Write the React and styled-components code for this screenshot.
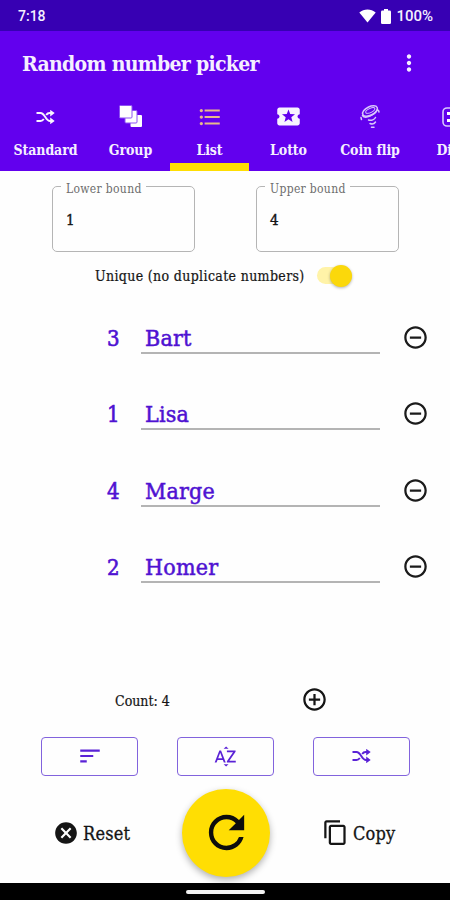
import React, { useState } from "react";
import styled, { createGlobalStyle } from "styled-components";
import {
  MdMoreVert,
  MdFormatListBulleted,
  MdLocalActivity,
  MdRemoveCircleOutline,
  MdAddCircleOutline,
  MdSort,
  MdSortByAlpha,
  MdCancel,
  MdContentCopy,
  MdRefresh,
} from "react-icons/md";

const GlobalStyle = createGlobalStyle`
  * {
    box-sizing: border-box;
  }
  body {
    margin: 0;
    background: #fefefe;
    font-family: "DejaVu Serif Condensed", "DejaVu Serif", serif;
    font-stretch: condensed;
  }
  button {
    padding: 0;
    border: 0;
    background: none;
    font: inherit;
    color: inherit;
  }
  svg {
    display: block;
    flex: none;
  }
`;

const ShuffleIcon = () => (
  <svg width="19" height="14" viewBox="0 0 19 14" fill="none">
    <path d="M0.5 3H4.5C9 3 9.500 11 14 11H15M0.500 11H4.500C6 11 7 10.200 7.800 9M10.200 5C11 3.800 12 3 13.500 3H15" stroke="currentColor" strokeWidth="1.900" />
    <path d="M14.200 -0.200L18.700 3L14.200 6.400ZM14.200 7.600L18.700 11L14.200 14.200Z" fill="currentColor" />
  </svg>
);

const GroupIcon = () => (
  <svg width="24" height="23" viewBox="0 0 24 23">
    <rect x="11.500" y="10" width="11.500" height="12" rx="1" fill="#fff" />
    <rect x="6" y="5.500" width="12" height="12.500" rx="1" fill="#fff" stroke="#8d52f3" strokeWidth="1" />
    <rect x="0.500" y="0.500" width="12.500" height="12.500" rx="1" fill="#fff" stroke="#8d52f3" strokeWidth="1" />
  </svg>
);

const CoinIcon = () => (
  <svg width="20" height="24" viewBox="0 0 20 24" fill="none" stroke="#d9c8fb" strokeWidth="1.500" strokeLinecap="round">
    <ellipse cx="10" cy="6" rx="8" ry="4.200" transform="rotate(-26 10 6)" />
    <ellipse cx="10.300" cy="5.500" rx="5" ry="2" transform="rotate(-26 10.300 5.500)" strokeWidth="0.900" />
    <path d="M2.500 10.500C5 14.500 15 10 17.500 4.500M1 12.500L1.500 14.500M18.500 5.500L19 7" />
    <path d="M8.500 15C11.500 16 14.500 14.500 15.500 12.500M10 18.500C12 19.300 14.500 18.500 15.500 17M11.500 22.300H14" />
  </svg>
);

const DiceIcon = () => (
  <svg width="20" height="20" viewBox="0 0 20 20" fill="none">
    <rect x="1" y="1" width="18" height="18" rx="4" stroke="#d9c8fb" strokeWidth="1.600" />
    <path d="M5 5H8V8H5ZM12 5H15V8H12ZM5 12H8V15H5ZM12 12H15V15H12Z" fill="#fff" />
  </svg>
);

const WifiIcon = () => (
  <svg width="17" height="14" viewBox="0 0 17 14">
    <path d="M0.300 3.400C5 -0.500 12 -0.500 16.700 3.400L8.500 13.500Z" fill="#fff" />
  </svg>
);

const BatteryIcon = () => (
  <svg width="10" height="15" viewBox="0 0 10 15">
    <path d="M3 0H7V1.600H8.700Q10 1.600 10 2.900V13.700Q10 15 8.700 15H1.300Q0 15 0 13.700V2.900Q0 1.600 1.300 1.600H3Z" fill="#fff" />
  </svg>
);

const tabs = [
  { id: "standard", title: "Standard", width: 91, icon: <ShuffleIcon /> },
  { id: "group", title: "Group", width: 79, icon: <GroupIcon /> },
  { id: "list", title: "List", width: 79, icon: <MdFormatListBulleted size={26} /> },
  { id: "lotto", title: "Lotto", width: 79, icon: <MdLocalActivity size={27} /> },
  { id: "coin", title: "Coin flip", width: 84, icon: <CoinIcon /> },
  { id: "dice", title: "Dice", width: 80, icon: <DiceIcon /> },
];

const items = [
  { id: 1, order: 3, name: "Bart" },
  { id: 2, order: 1, name: "Lisa" },
  { id: 3, order: 4, name: "Marge" },
  { id: 4, order: 2, name: "Homer" },
];

const App = () => {
  const [active, setActive] = useState("list");
  const [unique, setUnique] = useState(true);

  return (
    <Screen>
      <GlobalStyle />
      <StatusBar>
        <Clock>7:18</Clock>
        <WifiIcon />
        <BatteryIcon />
        <Percent>100%</Percent>
      </StatusBar>
      <Header>
        <TitleRow>
          <Title>Random number picker</Title>
          <button aria-label="More"><MdMoreVert size={26} /></button>
        </TitleRow>
        <Tabs>
          {tabs.map((tab) => (
            <Tab key={tab.id} $width={tab.width} $active={active === tab.id} onClick={() => setActive(tab.id)}>
              <TabIcon $active={active === tab.id}>{tab.icon}</TabIcon>
              <TabTitle>{tab.title}</TabTitle>
            </Tab>
          ))}
        </Tabs>
      </Header>
      <Bounds>
        <Field>
          <FieldLabel>Lower bound</FieldLabel>
          <FieldValue>1</FieldValue>
        </Field>
        <Field>
          <FieldLabel>Upper bound</FieldLabel>
          <FieldValue>4</FieldValue>
        </Field>
      </Bounds>
      <UniqueRow>
        <UniqueText>Unique (no duplicate numbers)</UniqueText>
        <Track $on={unique} onClick={() => setUnique(!unique)}>
          <Thumb />
        </Track>
      </UniqueRow>
      <List>
        {items.map((item) => (
          <ListItem key={item.id}>
            <Order>{item.order}</Order>
            <Name>{item.name}</Name>
            <button aria-label="Remove"><MdRemoveCircleOutline size={27} /></button>
          </ListItem>
        ))}
      </List>
      <CountRow>
        <Count>Count: {items.length}</Count>
        <button aria-label="Add"><MdAddCircleOutline size={27} /></button>
      </CountRow>
      <SortRow>
        <SortButton><MdSort size={26} /></SortButton>
        <SortButton><MdSortByAlpha size={25} /></SortButton>
        <SortButton><ShuffleIcon /></SortButton>
      </SortRow>
      <Actions>
        <Action>
          <MdCancel size={26} />
          <span>Reset</span>
        </Action>
        <Fab aria-label="Pick"><MdRefresh size={53} /></Fab>
        <Action>
          <MdContentCopy size={27} />
          <span>Copy</span>
        </Action>
      </Actions>
      <NavBar><NavPill /></NavBar>
    </Screen>
  );
};

const Screen = styled.div`
  width: 450px;
  height: 900px;
  display: flex;
  flex-direction: column;
  overflow: hidden;
  background: #fefefe;
  color: #151515;
`;

const StatusBar = styled.div`
  height: 30.500px;
  flex: none;
  display: flex;
  align-items: center;
  padding: 2px 17px 0 18px;
  background: #3700b3;
  color: #f4f0ff;
  font-family: Roboto, sans-serif;
  font-size: 14px;
  font-stretch: normal;
  font-weight: 500;
  svg {
    margin-right: 5px;
  }
`;

const Clock = styled.span`
  flex: 1;
`;

const Percent = styled.span`
  font-size: 15px;
`;

const Header = styled.header`
  height: 140.500px;
  flex: none;
  background: #6200ee;
  color: #f5efff;
`;

const TitleRow = styled.div`
  height: 65px;
  display: flex;
  align-items: center;
  justify-content: space-between;
  padding: 0 28px 0 22px;
`;

const Title = styled.h1`
  margin: 0;
  font-size: 21px;
  font-weight: 700;
  letter-spacing: -0.700px;
  white-space: nowrap;
`;

const Tabs = styled.nav`
  height: 75.500px;
  display: flex;
  overflow: hidden;
`;

const Tab = styled.button`
  width: ${({ $width }) => $width}px;
  flex: none;
  display: flex;
  flex-direction: column;
  align-items: center;
  border-bottom: 8px solid ${({ $active }) => ($active ? "#ffde03" : "transparent")};
`;

const TabIcon = styled.span`
  height: 42px;
  display: flex;
  align-items: center;
  color: ${({ $active }) => ($active ? "#e8b98a" : "#f8f3ff")};
`;

const TabTitle = styled.span`
  font-size: 14px;
  line-height: 24px;
  font-weight: 700;
  letter-spacing: -0.100px;
  white-space: nowrap;
`;

const Bounds = styled.div`
  display: flex;
  justify-content: space-between;
  padding: 5px 51px 0 52px;
`;

const Field = styled.fieldset`
  width: 143px;
  height: 75.500px;
  margin: 0;
  padding: 0 12px;
  border: 1.500px solid #b5b5b5;
  border-radius: 5px;
`;

const FieldLabel = styled.legend`
  margin-left: -4px;
  padding: 6px 4px 0 5px;
  font-size: 12px;
  line-height: 14px;
  letter-spacing: 0.320px;
  color: #6d6d6d;
  white-space: nowrap;
`;

const FieldValue = styled.div`
  padding: 12px 0 0 1px;
  font-size: 15px;
  line-height: 24px;
  -webkit-text-stroke: 0.400px currentColor;
`;

const UniqueRow = styled.div`
  height: 48px;
  display: flex;
  align-items: center;
  gap: 13px;
  padding-left: 95px;
`;

const UniqueText = styled.span`
  width: 209px;
  font-size: 14px;
  letter-spacing: 0.350px;
  white-space: nowrap;
  -webkit-text-stroke: 0.200px currentColor;
`;

const Track = styled.button`
  width: 35px;
  height: 17px;
  display: flex;
  align-items: center;
  justify-content: ${({ $on }) => ($on ? "flex-end" : "flex-start")};
  border-radius: 9px;
  background: #fff3a8;
`;

const Thumb = styled.span`
  width: 22px;
  height: 22px;
  flex: none;
  border-radius: 50%;
  background: #fbd80b;
  box-shadow: 0 1px 3px rgba(0, 0, 0, 0.3);
`;

const List = styled.div`
  height: 385px;
  flex: none;
  padding-top: 14px;
`;

const ListItem = styled.div`
  height: 76.500px;
  display: grid;
  grid-template-columns: 34px 239px 27px;
  align-items: start;
  padding-left: 107px;
  button {
    margin: 10px 0 0 22px;
    color: #1b1b1b;
  }
`;

const Order = styled.span`
  padding-top: 11px;
  font-size: 22px;
  line-height: 28px;
  letter-spacing: -0.500px;
  color: #4f12d2;
  -webkit-text-stroke: 0.600px currentColor;
`;

const Name = styled.span`
  height: 40px;
  padding: 10px 0 0 4px;
  border-bottom: 2px solid #b4b4b4;
  font-size: 23px;
  line-height: 28px;
  letter-spacing: 0.200px;
  color: #4f12d2;
  -webkit-text-stroke: 0.500px currentColor;
`;

const CountRow = styled.div`
  height: 52px;
  flex: none;
  display: flex;
  align-items: center;
  padding: 0 122px 22px 115px;
  justify-content: space-between;
`;

const Count = styled.span`
  padding-top: 2px;
  font-size: 14px;
  -webkit-text-stroke: 0.200px currentColor;
`;

const SortRow = styled.div`
  flex: none;
  display: flex;
  justify-content: space-between;
  padding: 0 40px 0 41px;
`;

const SortButton = styled.button`
  width: 97px;
  height: 39px;
  display: flex;
  align-items: center;
  justify-content: center;
  border: 1.500px solid #8263dd;
  border-radius: 4px;
  color: #5a22d6;
`;

const Actions = styled.div`
  flex: 1;
  min-height: 0;
  display: grid;
  grid-template-columns: 129px 88px 1fr;
  align-items: start;
  padding: 13px 0 0 53px;
`;

const Action = styled.button`
  height: 88px;
  display: flex;
  align-items: center;
  gap: 4px;
  font-size: 18px;
  letter-spacing: 0.200px;
  -webkit-text-stroke: 0.300px currentColor;
  span {
    padding-top: 2px;
  }
  &:last-child {
    padding-left: 52px;
  }
`;

const Fab = styled.button`
  width: 88px;
  height: 88px;
  display: flex;
  align-items: center;
  justify-content: center;
  border-radius: 50%;
  background: #ffde03;
  color: #0d0d0d;
  box-shadow: 0 3px 7px rgba(0, 0, 0, 0.3);
`;

const NavBar = styled.div`
  height: 17px;
  flex: none;
  position: relative;
  display: flex;
  justify-content: center;
  align-items: center;
  background: #000;
`;

const NavPill = styled.span`
  width: 79px;
  height: 4px;
  border-radius: 2px;
  background: #f2f2f2;
`;

export default App;
